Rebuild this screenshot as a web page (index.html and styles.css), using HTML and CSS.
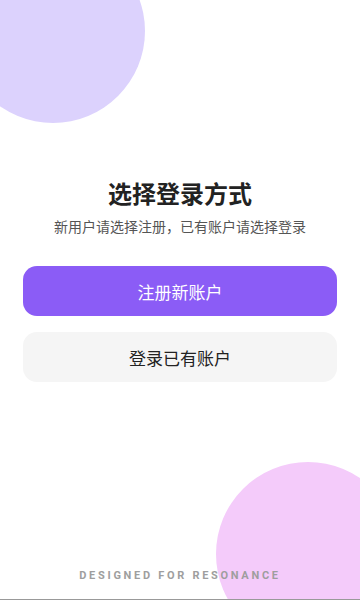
FILE: index.html
```html
<!DOCTYPE html>
<html lang="zh-CN">

<head>
    <meta charset="UTF-8">
    <meta name="viewport" content="width=device-width, initial-scale=1.0">
    <link rel="stylesheet" href="styles.css">
</head>

<body>
    <div class="page">
        <div class="blob blob-top"></div>
        <div class="blob blob-bottom"></div>

        <div class="content">
            <h1 class="title">选择登录方式</h1>
            <p class="subtitle">新用户请选择注册，已有账户请选择登录</p>

            <div class="actions">
                <button type="button" class="btn btn-primary">注册新账户</button>
                <button type="button" class="btn btn-secondary">登录已有账户</button>
            </div>
        </div>

        <div class="footer">DESIGNED FOR RESONANCE</div>
    </div>
</body>

</html>
```

FILE: styles.css
```css
* {
    box-sizing: border-box;
}

body {
    margin: 0;
    background: #fff;
    font-family: "Noto Sans CJK SC", "Noto Sans", sans-serif;
}

.page {
    position: relative;
    display: flex;
    flex-direction: column;
    height: 600px;
    overflow: hidden;
    border-bottom: 1px solid #999;
}

/* decorative circles */
.blob {
    position: absolute;
    border-radius: 50%;
    z-index: 0;
}

.blob-top {
    width: 184px;
    height: 184px;
    left: -39px;
    top: -61px;
    background: #dcd2fd;
}

.blob-bottom {
    width: 184px;
    height: 184px;
    left: 216px;
    top: 462px;
    background: #f4cbfa;
}

.content {
    position: relative;
    z-index: 1;
    padding: 177px 23px 0;
}

.title {
    margin: 0;
    text-align: center;
    font-size: 24px;
    line-height: 32px;
    font-weight: 700;
    color: #222;
}

.subtitle {
    margin: 7px 0 0;
    text-align: center;
    font-size: 14px;
    line-height: 20px;
    color: #555;
}

.actions {
    display: flex;
    flex-direction: column;
    gap: 16px;
    margin-top: 30px;
}

.btn {
    height: 50px;
    border: none;
    border-radius: 14px;
    font-family: inherit;
    font-size: 17px;
    cursor: pointer;
}

.btn-primary {
    background-color: #8b5cf6;
    color: #fff;
}

.btn-secondary {
    background-color: #f5f5f5;
    color: #222;
}

.footer {
    position: relative;
    z-index: 1;
    margin-top: auto;
    padding-bottom: 15px;
    text-align: center;
    font-family: Roboto, "Liberation Sans", sans-serif;
    font-size: 11px;
    line-height: 16px;
    font-weight: 700;
    letter-spacing: 2.7px;
    color: #9e9e9e;
}
```
